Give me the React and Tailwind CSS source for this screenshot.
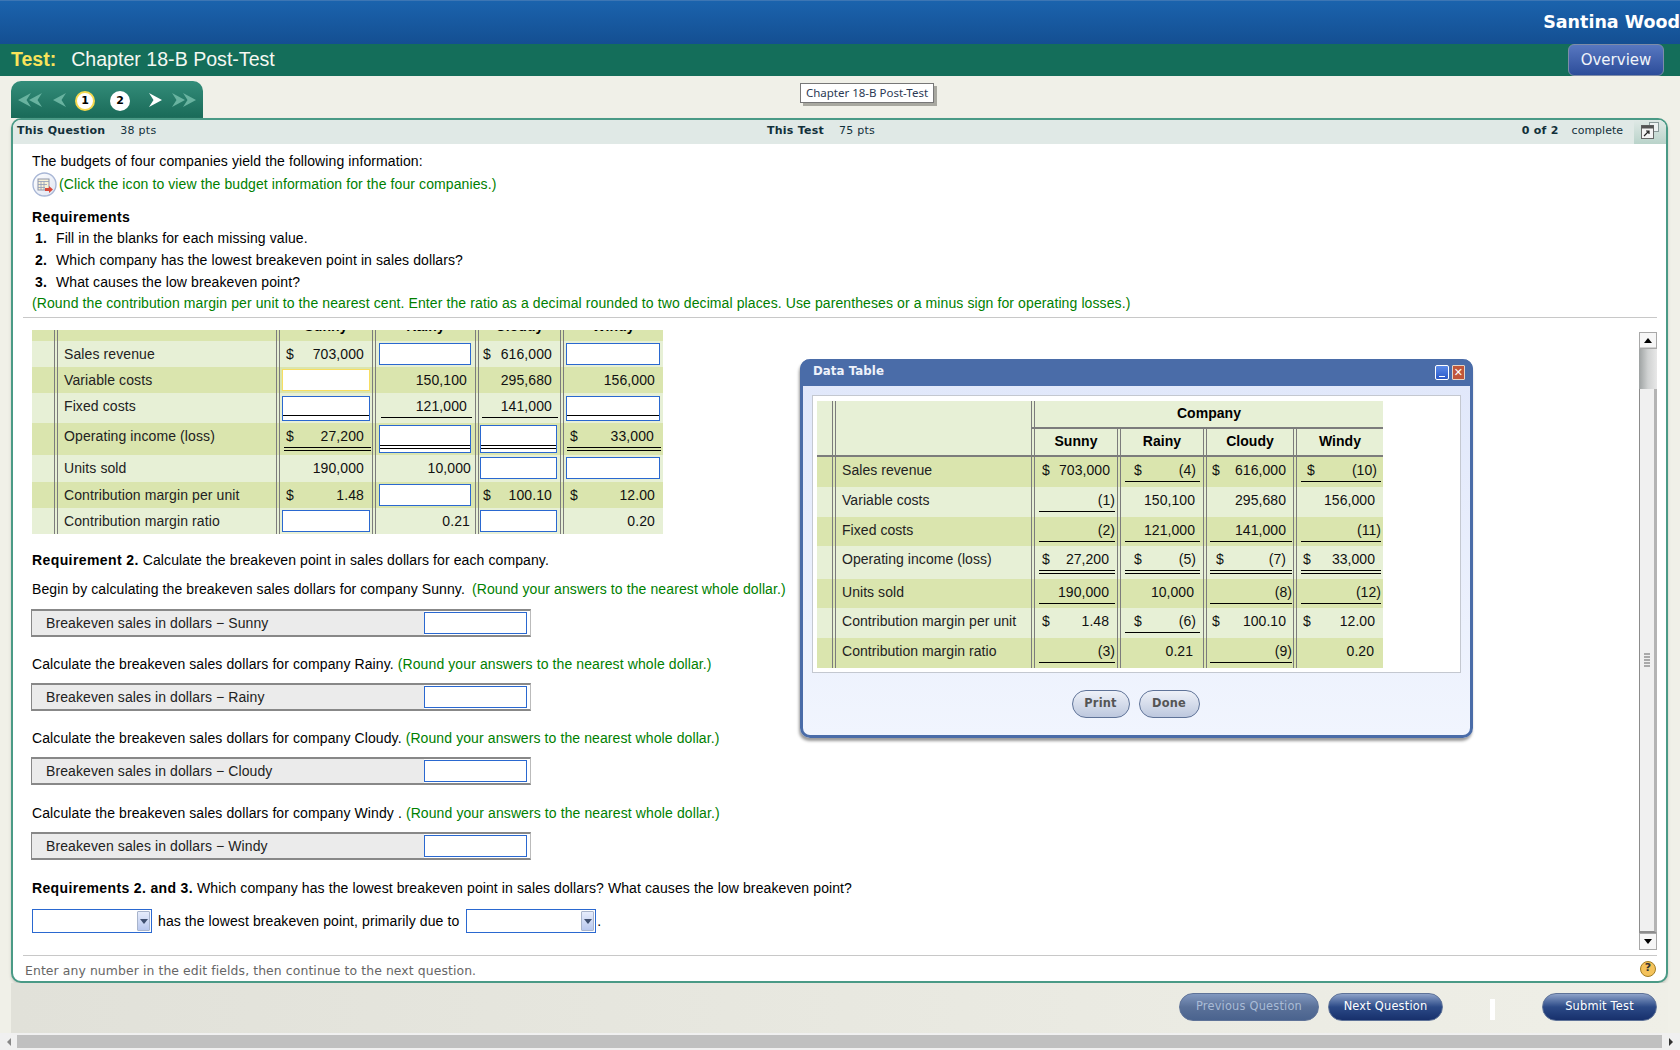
import React from 'react';
import clsx from 'clsx';

const BAND = 'bg-[#dae5ae]';
const PALE = 'bg-[#e7f0d6]';
const DBL = 'border-l-[4px] border-double border-[#7c7c7c] shrink-0';

function Arrow({ dir = 'left', className }) {
  return (
    <svg viewBox="0 0 13 14" className={clsx('h-[14px] w-[13px] shrink-0', className)} fill="currentColor">
      {dir === 'left' ? <path d="M0 7 L13 0 L8.5 7 L13 14 Z" /> : <path d="M13 7 L0 0 L4.5 7 L0 14 Z" />}
    </svg>
  );
}

function Val({ c }) {
  return (
    <div
      className={clsx(
        'flex justify-between leading-[21px] text-[14px] text-[#111]',
        c.u === 1 && 'h-[22px] border-b border-black',
        c.u === 2 && 'h-[25px] border-b-4 border-double border-black',
        !c.u && 'h-[21px]',
        c.cls,
      )}
    >
      <span>{c.d || ''}</span>
      <span>{c.v || ''}</span>
    </div>
  );
}

function Inp({ c }) {
  return (
    <div
      className={clsx(
        'border bg-white',
        c.focus ? 'border-[#f7de62]' : 'border-[#2a68d0]',
        c.kind === 'fixed' && 'h-[25px]',
        c.kind === 'op' && '-mt-px h-[28px]',
        !c.kind && '-mt-px h-[22px]',
        c.cls,
      )}
    >
      {c.kind === 'fixed' && <input aria-label="value" className="block h-[19px] w-full border-b border-black outline-none" />}
      {c.kind === 'op' && <input aria-label="value" className="block h-[23px] w-full border-b-4 border-double border-black outline-none" />}
      {!c.kind && <input aria-label="value" className="block h-full w-full outline-none" />}
    </div>
  );
}

const P = (d, v, cls, u) => ({ d, v, cls, u });
const I = (cls, kind, focus) => ({ input: true, cls, kind, focus });

const s1 = 'pl-[6px] pr-[8px]';
const s2 = 'pl-[4px] pr-[8px]';
const s3 = 'pl-[6px] pr-[8px]';
const iS = 'ml-[2px] w-[88px]';
const iR = 'ml-[3px] w-[92px]';
const iC = 'ml-[1px] w-[77px]';
const iW = 'ml-[2px] w-[94px]';

const leftRows = [
  { l: 'Sales revenue', h: 'h-[26px]', bg: PALE, c: [P('$', '703,000', s1), I(iR), P('$', '616,000', s2), I(iW)] },
  { l: 'Variable costs', h: 'h-[26px]', bg: BAND, c: [I(iS, null, true), P('', '150,100', s1), P('', '295,680', s2), P('', '156,000', s3)] },
  { l: 'Fixed costs', h: 'h-[30px]', bg: PALE, c: [I(iS, 'fixed'), P('', '121,000', 'ml-[5px] mr-[3px] pr-[5px]', 1), P('', '141,000', 'ml-[3px] mr-[2px] pr-[6px]', 1), I(iW, 'fixed')] },
  { l: 'Operating income (loss)', h: 'h-[32px]', bg: BAND, c: [P('$', '27,200', 'ml-[4px] mr-[1px] pl-[2px] pr-[7px]', 2), I(iR, 'op'), I(iC, 'op'), P('$', '33,000', 'ml-[3px] mr-[2px] pl-[3px] pr-[7px]', 2)] },
  { l: 'Units sold', h: 'h-[27px]', bg: PALE, c: [P('', '190,000', s1), P('', '10,000', 'pr-[4px]'), I(iC), I(iW)] },
  { l: 'Contribution margin per unit', h: 'h-[26px]', bg: BAND, c: [P('$', '1.48', s1), I(iR), P('$', '100.10', s2), P('$', '12.00', 'pl-[6px] pr-[8px]')] },
  { l: 'Contribution margin ratio', h: 'h-[26px]', bg: PALE, c: [I(iS), P('', '0.21', 'pr-[5px]'), I(iC), P('', '0.20', 'pr-[8px]')] },
];
const leftCols = ['w-[96px]', 'w-[103px]', 'w-[85px]', 'w-[103px]'];

const dS = 'ml-[4px] mr-[2px]';
const dR = 'ml-[4px] mr-[3px]';
const dC = 'ml-[3px] mr-[1px]';
const dW = 'ml-[4px] mr-[2px]';
const dataRows = [
  { l: 'Sales revenue', h: 'h-[30px]', bg: BAND, c: [P('$', '703,000', 'pl-[7px] pr-[7px]'), P('$', '(4)', `${dR} pl-[9px] pr-[4px]`, 1), P('$', '616,000', 'pl-[5px] pr-[7px]'), P('$', '(10)', `${dW} pl-[6px] pr-[4px]`, 1)] },
  { l: 'Variable costs', h: 'h-[30px]', bg: PALE, c: [P('', '(1)', dS, 1), P('', '150,100', 'pr-[8px]'), P('', '295,680', 'pr-[7px]'), P('', '156,000', 'pr-[8px]')] },
  { l: 'Fixed costs', h: 'h-[29px]', bg: BAND, c: [P('', '(2)', dS, 1), P('', '121,000', `${dR} pr-[5px]`, 1), P('', '141,000', `${dC} pr-[6px]`, 1), P('', '(11)', dW, 1)] },
  { l: 'Operating income (loss)', h: 'h-[33px]', bg: PALE, c: [P('$', '27,200', `${dS} pl-[3px] pr-[6px]`, 2), P('$', '(5)', `${dR} pl-[9px] pr-[4px]`, 2), P('$', '(7)', `${dC} pl-[6px] pr-[6px]`, 2), P('$', '33,000', `${dW} pl-[2px] pr-[6px]`, 2)] },
  { l: 'Units sold', h: 'h-[29px]', bg: BAND, c: [P('', '190,000', `${dS} pr-[6px]`, 1), P('', '10,000', 'pr-[9px]'), P('', '(8)', dC, 1), P('', '(12)', dW, 1)] },
  { l: 'Contribution margin per unit', h: 'h-[30px]', bg: PALE, c: [P('$', '1.48', 'pl-[7px] pr-[8px]'), P('$', '(6)', `${dR} pl-[9px] pr-[4px]`, 1), P('$', '100.10', 'pl-[5px] pr-[7px]'), P('$', '12.00', 'pl-[6px] pr-[8px]')] },
  { l: 'Contribution margin ratio', h: 'h-[30px]', bg: BAND, c: [P('', '(3)', dS, 1), P('', '0.21', 'pr-[10px]'), P('', '(9)', dC, 1), P('', '0.20', 'pr-[9px]')] },
];
const dataCols = ['w-[86px]', 'w-[86px]', 'w-[90px]', 'w-[90px]'];

function Row({ r, strip, label, cols, pt }) {
  return (
    <div className={clsx('flex', r.h, r.bg)}>
      <div className={clsx('shrink-0', strip)} />
      <div className={clsx(DBL, label, pt, 'pl-[6px] text-[14px] leading-[21px] text-[#222]')}>{r.l}</div>
      {r.c.map((c, i) => (
        <div key={i} className={clsx(DBL, cols[i], pt)}>
          {c.input ? <Inp c={c} /> : <Val c={c} />}
        </div>
      ))}
    </div>
  );
}

function AnswerBox({ label }) {
  return (
    <div className="-ml-px flex h-[28px] w-[500px] border border-y-2 border-[#888] border-r-[#bbb] bg-white">
      <div className="flex w-[392px] items-center bg-[#ebebeb] pl-[14px] text-[14px] text-[#222]">{label}</div>
      <input aria-label={label} className="mt-px h-[22px] w-[103px] border border-[#2a68d0] bg-white outline-none" />
    </div>
  );
}

function Sel({ w }) {
  return (
    <div className={clsx('flex h-[24px] items-stretch justify-end border border-[#2a68d0] bg-white', w)}>
      <div className="m-px flex w-[13px] items-center justify-center rounded-[1px] border border-[#a8b4cc] bg-gradient-to-b from-[#e6ecfb] to-[#b9c8ee]">
        <span className="block h-0 w-0 border-x-[4px] border-t-[5px] border-x-transparent border-t-[#3f4f70]" />
      </div>
    </div>
  );
}

function Btn({ children, cls }) {
  return (
    <button className={clsx('flex h-[28px] items-center justify-center rounded-full border border-[#5f7398] font-["DejaVu_Sans",sans-serif] text-[11.4px] tracking-[0.2px]', cls)}>
      {children}
    </button>
  );
}

function BudgetIcon() {
  return (
    <svg viewBox="0 0 25 25" className="h-[25px] w-[25px] shrink-0">
      <defs>
        <linearGradient id="bi" x1="0" y1="0" x2="1" y2="1">
          <stop offset="0" stopColor="#ffffff" />
          <stop offset="1" stopColor="#dfe5f2" />
        </linearGradient>
      </defs>
      <circle cx="12.5" cy="12.5" r="11.5" fill="url(#bi)" stroke="#a9b7d6" strokeWidth="1.4" />
      <rect x="6" y="7" width="11" height="11" fill="#f7f1d6" stroke="#8d93a8" />
      <path d="M6 9.5h11M9 9.5v8.5M12 9.5v8.5M6 12.5h9M6 15.5h7" stroke="#8d9ab8" strokeWidth="0.8" fill="none" />
      <path d="M13 16h4v-2l4 3.5-4 3.5v-2h-4z" fill="#d8483a" />
    </svg>
  );
}

export default function App() {
  return (
    <div className='relative flex h-[1050px] w-[1680px] flex-col overflow-hidden bg-[#f0f0e8] font-["Liberation_Sans",Arial,sans-serif] text-[14px] text-black'>
      {/* top bars */}
      <div className="flex h-[44px] shrink-0 items-start justify-end overflow-hidden border-t border-[#3d76b4] bg-gradient-to-b from-[#1b63ad] to-[#144f92] pt-[10px] whitespace-nowrap">
        <span className='font-["DejaVu_Sans",sans-serif] text-[17.5px] font-bold leading-[22px] text-white'>Santina Wood</span>
      </div>
      <div className="flex h-[32px] shrink-0 items-center bg-[#146e5a] pl-[11px] pr-[16px]">
        <span className="text-[19.5px] font-bold text-[#f8e35a]">Test:</span>
        <span className="ml-[15px] text-[19.6px] text-[#f4f8f2]">Chapter 18-B Post-Test</span>
        <button className='ml-auto h-[32px] w-[96px] rounded-[6px] border border-[#7d8ca8] bg-gradient-to-b from-[#5877c0] to-[#2c4d9a] font-["DejaVu_Sans",sans-serif] text-[15px] text-[#f0f4fa]'>
          Overview
        </button>
      </div>

      {/* question nav tab */}
      <div className="ml-[11px] mt-[5px] flex h-[37px] w-[192px] shrink-0 items-start rounded-t-[10px] bg-gradient-to-b from-[#338d7a] to-[#196a58] pl-[7px] pt-[12px] text-[#69b3a0]">
        <Arrow dir="left" />
        <Arrow dir="left" className="-ml-[2px]" />
        <Arrow dir="left" className="ml-[11px]" />
        <span className='ml-[9px] -mt-[2px] flex h-[20px] w-[20px] shrink-0 items-center justify-center rounded-full border-2 border-[#f6d94e] bg-white font-["DejaVu_Sans",sans-serif] text-[11px] font-bold text-black'>1</span>
        <span className='ml-[15px] -mt-[2px] flex h-[20px] w-[20px] shrink-0 items-center justify-center rounded-full bg-white font-["DejaVu_Sans",sans-serif] text-[11px] font-bold text-black'>2</span>
        <Arrow dir="right" className="ml-[19px] text-white" />
        <Arrow dir="right" className="ml-[10px]" />
        <Arrow dir="right" className="-ml-[2px]" />
      </div>

      {/* question panel */}
      <div className="ml-[11px] flex h-[865px] w-[1657px] shrink-0 flex-col overflow-hidden rounded-[10px] border-2 border-[#4a9a86] bg-white tracking-[0.1px] shadow-[0_2px_3px_#c8c8c0]">
        <div className='flex h-[24px] shrink-0 items-center bg-[#e0e9e6] font-["DejaVu_Sans",sans-serif] text-[11px] tracking-[0.25px] text-[#12303a]'>
          <div className="flex w-[754px] pb-[2px] pl-[4px]">
            <span className="font-bold">This Question</span>
            <span className="ml-[15px]">38 pts</span>
          </div>
          <span className="pb-[2px] font-bold">This Test</span>
          <span className="ml-[15px] pb-[2px]">75 pts</span>
          <span className="ml-auto pb-[2px] font-bold">0 of 2</span>
          <span className="ml-[13px] pb-[2px] tracking-normal">complete</span>
          <div className="ml-[11px] flex h-full w-[32px] items-center justify-center bg-gradient-to-b from-[#e0e9e6] to-[#b9d3ca] pb-[3px]">
            <svg viewBox="0 0 18 17" className="h-[17px] w-[18px]">
              <rect x="8.5" y="0.5" width="9" height="9" fill="#eef2f2" stroke="#8a9a9a" />
              <rect x="0.5" y="3.5" width="12" height="13" fill="#f4f4f4" stroke="#666" />
              <rect x="0.5" y="3.5" width="12" height="3" fill="#555" />
              <path d="M3 14 L8 9 M5 9 h3 v3" stroke="#222" strokeWidth="1.2" fill="none" />
            </svg>
          </div>
        </div>

        <div className="shrink-0 pl-[19px]">
          <div className="mt-[7px] flex h-[20px] items-center">The budgets of four companies yield the following information:</div>
          <div className="mt-px flex h-[25px] items-center text-[#008000]">
            <BudgetIcon />
            <span className="ml-[2px]">(Click the icon to view the budget information for the four companies.)</span>
          </div>
          <div className="mt-[10px] flex h-[20px] items-center font-bold tracking-[0.4px]">Requirements</div>
          <div>
            {['Fill in the blanks for each missing value.', 'Which company has the lowest breakeven point in sales dollars?', 'What causes the low breakeven point?'].map((t, i) => (
              <div key={t} className="flex h-[22px] items-center">
                <b className="w-[24px] pl-[3px]">{i + 1}.</b>
                <span>{t}</span>
              </div>
            ))}
          </div>
          <div className="flex h-[20px] items-center text-[#008000]">
            (Round the contribution margin per unit to the nearest cent. Enter the ratio as a decimal rounded to two decimal places. Use parentheses or a minus sign for operating losses.)
          </div>
        </div>
        <div className="ml-[10px] mr-[9px] mt-[4px] h-px shrink-0 bg-[#c8c8c8]" />

        {/* scrolling area */}
        <div className="flex min-h-0 flex-1 overflow-hidden pl-[19px] pr-[9px]">
          <div className="min-w-0 flex-1 pt-[12px]">
            <div className="w-[631px]">
              <div className={clsx('flex h-[11px] overflow-hidden', BAND)}>
                <div className="w-[22px] shrink-0" />
                <div className={clsx(DBL, 'w-[222px]')} />
                {['Sunny', 'Rainy', 'Cloudy', 'Windy'].map((n, i) => (
                  <div key={n} className={clsx(DBL, leftCols[i])}>
                    <div className="-mt-[12px] text-center text-[14px] font-bold leading-[17px]">{n}</div>
                  </div>
                ))}
              </div>
              {leftRows.map((r) => (
                <Row key={r.l} r={r} strip="w-[22px]" label="w-[222px]" cols={leftCols} pt="pt-[3px]" />
              ))}
            </div>

            <div className="mt-[16px] flex h-[20px] items-center"><b className="tracking-[0.4px]">Requirement 2.</b>&nbsp;Calculate the breakeven point in sales dollars for each company.</div>
            <div className="mt-[9px] flex h-[20px] items-center">
              Begin by calculating the breakeven sales dollars for company&nbsp;Sunny.&nbsp;<span className="ml-[3px] text-[#008000]">(Round your answers to the nearest whole dollar.)</span>
            </div>
            <div className="mt-[10px]"><AnswerBox label="Breakeven sales in dollars − Sunny" /></div>
            <div className="mt-[17px] flex h-[20px] items-center">
              Calculate the breakeven sales dollars for company Rainy.&nbsp;<span className="text-[#008000]">(Round your answers to the nearest whole dollar.)</span>
            </div>
            <div className="mt-[9px]"><AnswerBox label="Breakeven sales in dollars − Rainy" /></div>
            <div className="mt-[17px] flex h-[20px] items-center">
              Calculate the breakeven sales dollars for company Cloudy.&nbsp;<span className="text-[#008000]">(Round your answers to the nearest whole dollar.)</span>
            </div>
            <div className="mt-[9px]"><AnswerBox label="Breakeven sales in dollars − Cloudy" /></div>
            <div className="mt-[18px] flex h-[20px] items-center">
              Calculate the breakeven sales dollars for company Windy .&nbsp;<span className="text-[#008000]">(Round your answers to the nearest whole dollar.)</span>
            </div>
            <div className="mt-[9px]"><AnswerBox label="Breakeven sales in dollars − Windy" /></div>
            <div className="mt-[18px] flex h-[20px] items-center"><b className="tracking-[0.35px]">Requirements 2. and 3.</b>&nbsp;Which company has the lowest breakeven point in sales dollars? What causes the low breakeven point?</div>
            <div className="mt-[11px] flex h-[24px] items-center">
              <Sel w="w-[120px]" />
              <span className="ml-[6px]">has the lowest breakeven point, primarily due to</span>
              <div className="ml-[7px]"><Sel w="w-[130px]" /></div>
              <span className="ml-[1px]">.</span>
            </div>
          </div>

          {/* vertical scrollbar */}
          <div className="mb-[5px] mt-[14px] flex w-[18px] shrink-0 flex-col">
            <div className="flex h-[17px] shrink-0 items-center justify-center border border-[#a8a8a8] bg-[#f6f6f6] shadow-[inset_0_-1px_0_#d0d0d0]">
              <span className="block h-0 w-0 border-x-[4px] border-b-[5px] border-x-transparent border-b-black" />
            </div>
            <div className="h-[40px] shrink-0 bg-gradient-to-r from-[#9ea2a2] via-[#d0d2d2] to-[#e8e8e8]" />
            <div className="flex min-h-0 flex-1 items-center justify-center border-b-2 border-l border-r-[3px] border-[#8c8c8c] border-r-[#b4b4b4] bg-[#f0f0f0]">
              <div className="flex w-[6px] flex-col gap-px">
                {[0, 1, 2, 3, 4].map((k) => <span key={k} className="block h-[2px] bg-[#aaa]" />)}
              </div>
            </div>
            <div className="flex h-[17px] shrink-0 items-center justify-center border border-[#a8a8a8] bg-[#f6f6f6]">
              <span className="block h-0 w-0 border-x-[4px] border-t-[5px] border-x-transparent border-t-black" />
            </div>
          </div>
        </div>

        <div className="ml-[10px] mr-[9px] h-px shrink-0 bg-[#c8c8c8]" />
        <div className='flex h-[25px] shrink-0 items-center justify-between pl-[12px] pr-[10px] pt-[5px] font-["DejaVu_Sans",sans-serif] text-[12.4px] text-[#666]'>
          <span>Enter any number in the edit fields, then continue to the next question.</span>
          <span className="-mt-[5px] flex h-[16px] w-[16px] items-center justify-center rounded-full border border-[#a07c24] bg-[#f4c25a] text-[11px] font-bold text-[#333]">?</span>
        </div>
      </div>

      {/* bottom buttons */}
      <div className="ml-[11px] mr-[12px] flex h-[50px] shrink-0 items-start justify-end bg-gradient-to-r from-[#e1e1d9] to-[#efefe7] pr-[11px] pt-[10px]">
        <Btn cls="w-[140px] bg-gradient-to-b from-[#8298bf] via-[#5a7199] to-[#4a638e] text-[#a9bbd6]">Previous Question</Btn>
        <Btn cls="ml-[9px] w-[115px] bg-gradient-to-b from-[#8fa3c9] via-[#2c4a87] to-[#17306c] text-white">Next Question</Btn>
        <div className="ml-[47px] mt-[6px] h-[21px] w-[5px] bg-white" />
        <Btn cls="ml-[47px] w-[115px] bg-gradient-to-b from-[#8fa3c9] via-[#2c4a87] to-[#17306c] text-white">Submit Test</Btn>
      </div>

      {/* page horizontal scrollbar */}
      <div className="flex h-[17px] shrink-0 items-center bg-[#f0f0f0]">
        <div className="flex w-[17px] justify-center">
          <span className="block h-0 w-0 border-y-[4px] border-r-[4px] border-y-transparent border-r-[#888]" />
        </div>
        <div className="h-[13px] flex-1 bg-[#c0c0c0]" />
        <div className="flex w-[18px] justify-center">
          <span className="block h-0 w-0 border-y-[4px] border-l-[4px] border-y-transparent border-l-[#333]" />
        </div>
      </div>

      {/* tooltip */}
      <div className='absolute left-[800px] top-[83px] flex h-[20px] w-[134px] items-center justify-center border border-[#777] bg-white font-["Noto_Sans",sans-serif] text-[11.5px] text-[#2b3a55] shadow-[3px_3px_0_#a8a8a0]'>
        Chapter 18-B Post-Test
      </div>

      {/* Data table dialog */}
      <div className="absolute left-[800px] top-[359px] flex h-[379px] w-[673px] flex-col rounded-[10px] border-[3px] border-t-0 border-[#4a6ca8] bg-gradient-to-b from-[#e0e7fa] to-[#f1f5fe] tracking-[0.05px] shadow-[-1px_3px_3px_#9a9a9a]">
        <div className='-mx-[3px] flex h-[27px] shrink-0 items-center justify-between rounded-t-[10px] bg-[#4a6ca8] pl-[13px] pr-[8px] font-["DejaVu_Sans",sans-serif] text-[11.8px] font-bold text-[#eef2fa]'>
          <span className="-mt-[2px]">Data Table</span>
          <div className="flex items-center gap-[3px]">
            <span className="flex h-[15px] w-[14px] items-end justify-center rounded-[2px] border border-white bg-gradient-to-b from-[#5b8ae8] to-[#2a58c8] pb-[2px]">
              <span className="block h-px w-[6px] bg-white" />
            </span>
            <span className="flex h-[15px] w-[13px] items-center justify-center rounded-[1px] border border-[#e6d4c4] bg-[#c0563a] text-[11px] font-bold leading-none text-white">✕</span>
          </div>
        </div>
        <div className="mx-[9px] mt-[9px] h-[278px] shrink-0 border border-[#c4c8d0] bg-white pl-[4px] pt-[5px]">
          <div className="w-[566px]">
            <div className={clsx('flex', PALE)}>
              <div className="w-[15px] shrink-0" />
              <div className={clsx(DBL, 'w-[199px]')} />
              <div className="min-w-0 flex-1">
                <div className={clsx(DBL, 'flex h-[26px] items-center justify-center pb-px text-[14px] font-bold')}>Company</div>
                <div className="h-[2px] bg-[#7c7c7c]" />
                <div className="flex h-[26px]">
                  {['Sunny', 'Rainy', 'Cloudy', 'Windy'].map((n, i) => (
                    <div key={n} className={clsx(DBL, dataCols[i], 'flex items-center justify-center pb-[2px] text-[14px] font-bold')}>{n}</div>
                  ))}
                </div>
              </div>
            </div>
            <div className="h-[2px] bg-[#7c7c7c]" />
            {dataRows.map((r) => (
              <Row key={r.l} r={r} strip="w-[15px]" label="w-[199px]" cols={dataCols} pt="pt-[3px]" />
            ))}
          </div>
        </div>
        <div className="mt-[17px] flex justify-center gap-[9px] pr-[2px]">
          <Btn cls="w-[58px] bg-gradient-to-b from-[#eef1f8] to-[#bdc8de] font-bold text-[#555]">Print</Btn>
          <Btn cls="w-[61px] bg-gradient-to-b from-[#eef1f8] to-[#bdc8de] font-bold text-[#555]">Done</Btn>
        </div>
      </div>
    </div>
  );
}
